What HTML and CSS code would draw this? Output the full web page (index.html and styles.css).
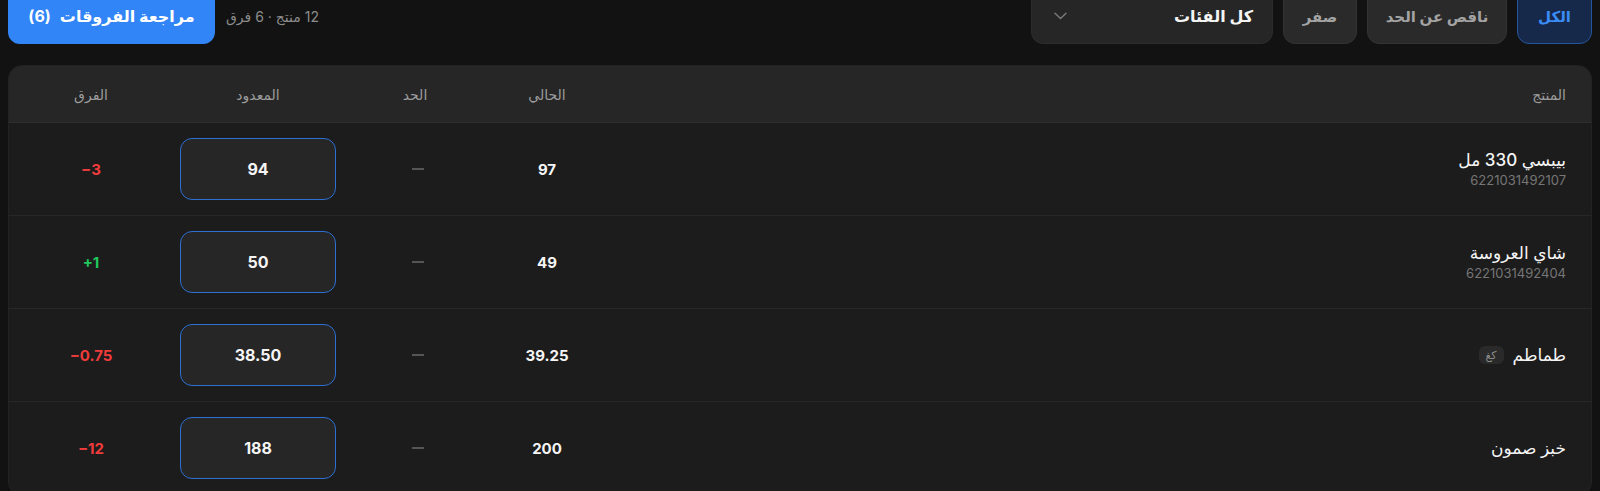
FILE: index.html
```html
<!DOCTYPE html>
<html lang="ar" dir="rtl">
<head>
<meta charset="utf-8">
<title>الجرد</title>
<link rel="stylesheet" href="styles.css">
</head>
<body>
<div class="page">
  <div class="toolbar">
    <div class="filters">
      <button class="chip chip-active chip-all">الكل</button>
      <button class="chip chip-low">ناقص عن الحد</button>
      <button class="chip chip-zero">صفر</button>
      <div class="select">
        <span class="select-label">كل الفئات</span>
        <svg class="chev" width="13" height="8" viewBox="0 0 13 8"><path d="M1 1.2 L6.5 6.6 L12 1.2" fill="none" stroke="#7a7a7a" stroke-width="1.4" stroke-linecap="round" stroke-linejoin="round"/></svg>
      </div>
    </div>
    <div class="summary">
      <span class="summary-text">12 منتج · 6 فرق</span>
      <button class="review-btn"><span>مراجعة الفروقات</span><span>(6)</span></button>
    </div>
  </div>

  <div class="card">
    <div class="row head">
      <div class="c-prod">المنتج</div>
      <div class="c-mid">الحالي</div>
      <div class="c-mid">الحد</div>
      <div class="c-mid">المعدود</div>
      <div class="c-mid">الفرق</div>
    </div>

    <div class="row">
      <div class="c-prod">
        <div class="pname">بيبسي 330 مل</div>
        <div class="barcode">6221031492107</div>
      </div>
      <div class="c-mid num">97</div>
      <div class="c-mid"><span class="dash"></span></div>
      <div class="c-mid"><div class="count">94</div></div>
      <div class="c-mid diff neg">−3</div>
    </div>

    <div class="row">
      <div class="c-prod">
        <div class="pname">شاي العروسة</div>
        <div class="barcode">6221031492404</div>
      </div>
      <div class="c-mid num">49</div>
      <div class="c-mid"><span class="dash"></span></div>
      <div class="c-mid"><div class="count">50</div></div>
      <div class="c-mid diff pos">+1</div>
    </div>

    <div class="row">
      <div class="c-prod">
        <div class="pline"><span class="pname">طماطم</span><span class="unit">كغ</span></div>
      </div>
      <div class="c-mid num">39.25</div>
      <div class="c-mid"><span class="dash"></span></div>
      <div class="c-mid"><div class="count">38.50</div></div>
      <div class="c-mid diff neg">−0.75</div>
    </div>

    <div class="row">
      <div class="c-prod">
        <div class="pname">خبز صمون</div>
      </div>
      <div class="c-mid num">200</div>
      <div class="c-mid"><span class="dash"></span></div>
      <div class="c-mid"><div class="count">188</div></div>
      <div class="c-mid diff neg">−12</div>
    </div>
  </div>
</div>
</body>
</html>
```

FILE: styles.css
```css
* { box-sizing: border-box; }
html, body {
  margin: 0;
  background: #121212;
  height: 491px;
  overflow: hidden;
}
body {
  font-family: Inter, "DejaVu Sans", sans-serif;
  color: #f2f2f2;
}
.page {
  padding: 0 8px;
}
.toolbar {
  display: flex;
  justify-content: space-between;
  align-items: center;
  margin-top: -12px;
  height: 56px;
}
.filters {
  display: flex;
  gap: 10px;
  height: 56px;
}
.chip {
  font-family: inherit;
  height: 56px;
  padding: 0;
  border-radius: 12px;
  border: 1px solid #333333;
  background: #2a2a2a;
  color: #a3a3a3;
  font-size: 15px;
  font-weight: 700;
}
.chip-all { width: 75px; }
.chip-low { width: 140px; }
.chip-zero { width: 74px; }
.chip-active {
  background: #16294a;
  border-color: #24549a;
  color: #3b8cf6;
}
.select {
  width: 242px;
  height: 56px;
  border-radius: 12px;
  border: 1px solid #2c2c2c;
  background: #262626;
  display: flex;
  align-items: center;
  justify-content: space-between;
  padding: 0 19px 0 22px;
}
.select-label {
  font-size: 16px;
  font-weight: 700;
  color: #f4f4f4;
}
.summary {
  display: flex;
  align-items: center;
  gap: 11px;
  height: 56px;
}
.summary-text {
  font-size: 14px;
  color: #8c8c8c;
}
.review-btn {
  font-family: inherit;
  height: 56px;
  width: 207px;
  border: none;
  border-radius: 12px;
  background: #3185f7;
  color: #ffffff;
  font-size: 16px;
  font-weight: 700;
  display: flex;
  align-items: center;
  justify-content: center;
  gap: 9px;
}
.card {
  margin-top: 21px;
  background: #1c1c1c;
  border: 1px solid #232323;
  border-radius: 14px;
  overflow: hidden;
}
.row {
  display: grid;
  grid-template-columns: 1fr 168px 96px 218px 116px;
  align-items: center;
  padding: 0 24px;
  height: 93px;
  border-bottom: 1px solid #272727;
}
.row.head {
  height: 57px;
  background: #262626;
  border-bottom: 1px solid #2e2e2e;
  font-size: 14px;
  color: #9c9c9c;
  font-weight: 500;
}
.c-prod {
  text-align: right;
  padding-right: 1px;
}
.c-mid {
  display: flex;
  justify-content: center;
}
.pname {
  font-size: 17px;
  font-weight: 500;
  color: #f5f5f5;
}
.barcode {
  margin-top: 2px;
  font-size: 13px;
  color: #767676;
}
.pline {
  display: flex;
  align-items: center;
  gap: 9px;
}
.unit {
  background: #2a2a2a;
  color: #8e8e8e;
  font-size: 11px;
  border-radius: 6px;
  padding: 2px 7px;
  line-height: 14px;
}
.num {
  font-size: 15px;
  font-weight: 700;
  color: #f5f5f5;
}
.dash {
  display: block;
  width: 12px;
  height: 2px;
  background: #555555;
  margin-left: 6px;
}
.count {
  width: 156px;
  height: 62px;
  border: 1.5px solid #2d6fd3;
  border-radius: 12px;
  background: #262626;
  display: flex;
  align-items: center;
  justify-content: center;
  font-size: 16px;
  font-weight: 700;
  color: #f5f5f5;
}
.diff {
  font-size: 15px;
  font-weight: 700;
  direction: ltr;
}
.neg { color: #ef3b3b; }
.pos { color: #22c55e; }
```
